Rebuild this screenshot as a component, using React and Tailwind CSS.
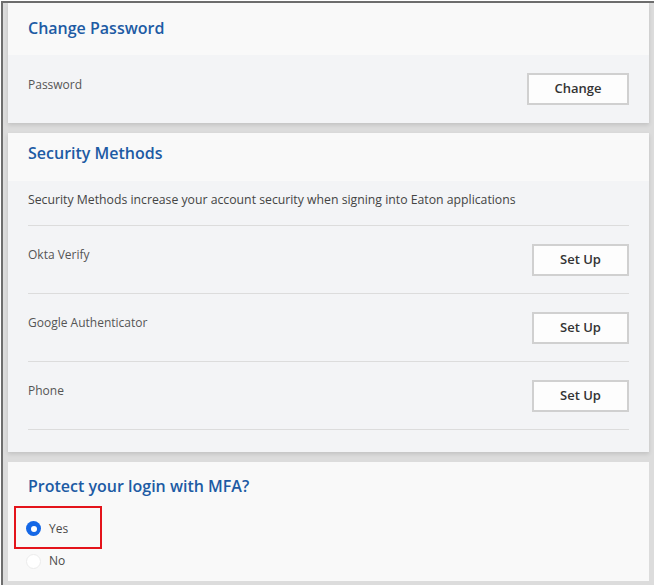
const METHODS = ["Okta Verify", "Google Authenticator", "Phone"];

function SectionTitle({ children }) {
  return <h2 className="text-[16px] leading-[22px] font-semibold text-[#1d5ba4]">{children}</h2>;
}

function OutlineButton({ children, className = "" }) {
  return (
    <button
      className={`h-[32px] border-2 border-[#d0d0d0] bg-[#fdfdfd] text-[13px] font-semibold text-[#333] ${className}`}
    >
      {children}
    </button>
  );
}

function Radio({ checked, label }) {
  return (
    <label className="flex items-center gap-[8px] text-[12px] leading-[16px] text-[#4a4a4a]">
      {checked ? (
        <span className="flex h-[15px] w-[15px] items-center justify-center rounded-full bg-[#1467e6]">
          <span className="h-[6px] w-[6px] rounded-full bg-white" />
        </span>
      ) : (
        <span className="h-[15px] w-[15px] rounded-full border border-[#ececec] bg-white" />
      )}
      {label}
    </label>
  );
}

export default function App() {
  return (
    <div
      className="h-[585px] w-[654px] overflow-hidden bg-white"
      style={{ fontFamily: '"Open Sans", "Noto Sans", sans-serif' }}
    >
      <div className="ml-[1px] mt-[1px] flex h-[584px] w-[653px] flex-col gap-[10px] border-l-2 border-t-2 border-[#6e6e6e] bg-[#dcdcdc] pb-[4px] pl-[5px] pr-[5px]">
        {/* Change password */}
        <section className="shadow-[0_2px_4px_rgba(0,0,0,0.12)]">
          <div className="h-[52px] bg-[#f9f9f9] px-[20px] pt-[14px]">
            <SectionTitle>Change Password</SectionTitle>
          </div>
          <div className="flex h-[68px] items-center justify-between bg-[#f3f4f6] px-[20px]">
            <span className="mb-[8px] text-[12px] text-[#555]">Password</span>
            <OutlineButton className="w-[102px]">Change</OutlineButton>
          </div>
        </section>

        {/* Security methods */}
        <section className="shadow-[0_2px_4px_rgba(0,0,0,0.12)]">
          <div className="h-[48px] bg-[#f9f9f9] px-[20px] pt-[9px]">
            <SectionTitle>Security Methods</SectionTitle>
          </div>
          <div className="bg-[#f3f4f6] px-[20px] pb-[22px]">
            <p className="h-[45px] border-b border-[#dcdcdc] pt-[10px] text-[12.25px] leading-[18px] text-[#444]">
              Security Methods increase your account security when signing into Eaton applications
            </p>
            {METHODS.map((name) => (
              <div
                key={name}
                className="flex h-[68px] items-center justify-between border-b border-[#dcdcdc]"
              >
                <span className="mb-[10px] text-[12px] text-[#555]">{name}</span>
                <OutlineButton className="w-[97px]">Set Up</OutlineButton>
              </div>
            ))}
          </div>
        </section>

        {/* MFA opt-in */}
        <section className="flex-1 bg-[#f9f9f9]">
          <div className="h-[44px] px-[20px] pt-[13px]">
            <SectionTitle>Protect your login with MFA?</SectionTitle>
          </div>
          <div className="ml-[6px] flex h-[43px] w-[88px] items-center border-2 border-[#e4141b] pl-[10px] pt-[2px]">
            <Radio checked label="Yes" />
          </div>
          <div className="ml-[18px] mt-[4px]">
            <Radio label="No" />
          </div>
        </section>
      </div>
    </div>
  );
}
